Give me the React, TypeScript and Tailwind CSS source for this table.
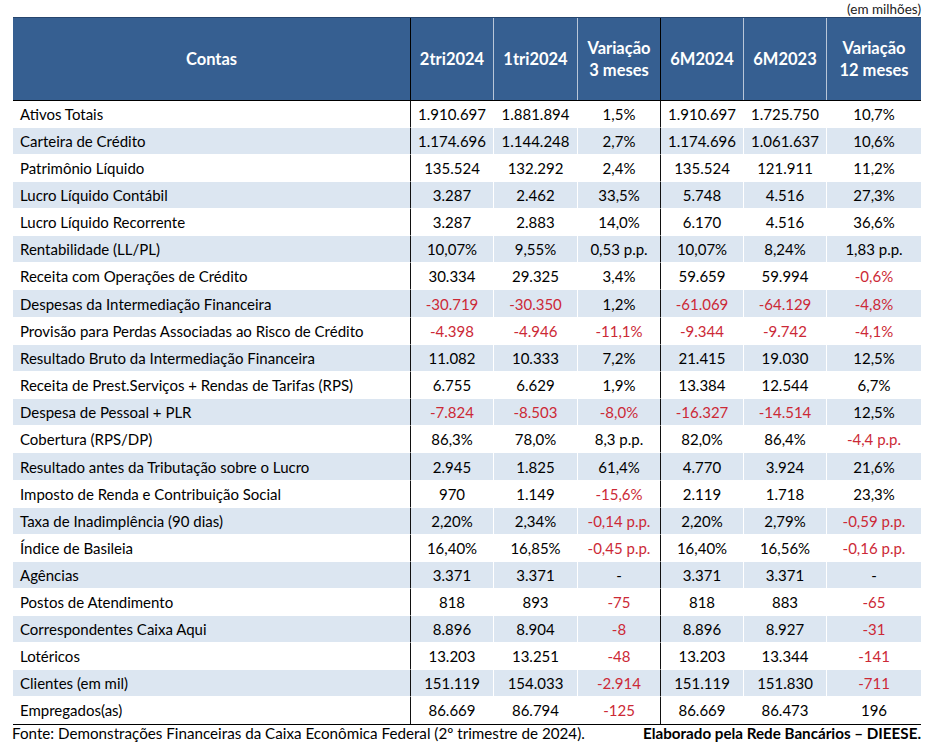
import React from "react";

const rows: string[][] = [
  ["Ativos Totais", "1.910.697", "1.881.894", "1,5%", "1.910.697", "1.725.750", "10,7%"],
  ["Carteira de Crédito", "1.174.696", "1.144.248", "2,7%", "1.174.696", "1.061.637", "10,6%"],
  ["Patrimônio Líquido", "135.524", "132.292", "2,4%", "135.524", "121.911", "11,2%"],
  ["Lucro Líquido Contábil", "3.287", "2.462", "33,5%", "5.748", "4.516", "27,3%"],
  ["Lucro Líquido Recorrente", "3.287", "2.883", "14,0%", "6.170", "4.516", "36,6%"],
  ["Rentabilidade (LL/PL)", "10,07%", "9,55%", "0,53 p.p.", "10,07%", "8,24%", "1,83 p.p."],
  ["Receita com Operações de Crédito", "30.334", "29.325", "3,4%", "59.659", "59.994", "-0,6%"],
  ["Despesas da Intermediação Financeira", "-30.719", "-30.350", "1,2%", "-61.069", "-64.129", "-4,8%"],
  ["Provisão para Perdas Associadas ao Risco de Crédito", "-4.398", "-4.946", "-11,1%", "-9.344", "-9.742", "-4,1%"],
  ["Resultado Bruto da Intermediação Financeira", "11.082", "10.333", "7,2%", "21.415", "19.030", "12,5%"],
  ["Receita de Prest.Serviços + Rendas de Tarifas (RPS)", "6.755", "6.629", "1,9%", "13.384", "12.544", "6,7%"],
  ["Despesa de Pessoal + PLR", "-7.824", "-8.503", "-8,0%", "-16.327", "-14.514", "12,5%"],
  ["Cobertura (RPS/DP)", "86,3%", "78,0%", "8,3 p.p.", "82,0%", "86,4%", "-4,4 p.p."],
  ["Resultado antes da Tributação sobre o Lucro", "2.945", "1.825", "61,4%", "4.770", "3.924", "21,6%"],
  ["Imposto de Renda e Contribuição Social", "970", "1.149", "-15,6%", "2.119", "1.718", "23,3%"],
  ["Taxa de Inadimplência (90 dias)", "2,20%", "2,34%", "-0,14 p.p.", "2,20%", "2,79%", "-0,59 p.p."],
  ["Índice de Basileia", "16,40%", "16,85%", "-0,45 p.p.", "16,40%", "16,56%", "-0,16 p.p."],
  ["Agências", "3.371", "3.371", "-", "3.371", "3.371", "-"],
  ["Postos de Atendimento", "818", "893", "-75", "818", "883", "-65"],
  ["Correspondentes Caixa Aqui", "8.896", "8.904", "-8", "8.896", "8.927", "-31"],
  ["Lotéricos", "13.203", "13.251", "-48", "13.203", "13.344", "-141"],
  ["Clientes (em mil)", "151.119", "154.033", "-2.914", "151.119", "151.830", "-711"],
  ["Empregados(as)", "86.669", "86.794", "-125", "86.669", "86.473", "196"],
];

const widths = ["w-[398px]", "w-[83px]", "w-[84px]", "w-[83px]", "w-[83px]", "w-[83px]", "w-[94px]"];

export default function App() {
  return (
    <div
      className="w-[930px] h-[742px] bg-white text-black overflow-hidden"
      style={{ fontFamily: "Lato, 'Noto Sans', sans-serif" }}
    >
      <div className="ml-[13px] w-[908px]">
        <div className="h-[17px] flex justify-end items-start text-[13.5px] leading-[18px] text-[#222]">
          (em milhões)
        </div>
        {/* header */}
        <div className="flex h-[84px] bg-[#365f91] text-white font-bold text-[16.5px] leading-[22px] border-t border-[#27466e] border-b border-b-black">
          <div className="w-[398px] flex items-center justify-center border-r border-black">Contas</div>
          <div className="w-[83px] flex items-center justify-center border-r border-[#b9c6d8]">2tri2024</div>
          <div className="w-[84px] flex items-center justify-center border-r border-[#b9c6d8]">1tri2024</div>
          <div className="w-[83px] flex flex-col items-center justify-center border-r border-black text-center">
            <span>Variação</span>
            <span>3 meses</span>
          </div>
          <div className="w-[83px] flex items-center justify-center border-r border-[#b9c6d8]">6M2024</div>
          <div className="w-[83px] flex items-center justify-center border-r border-[#b9c6d8]">6M2023</div>
          <div className="w-[94px] flex flex-col items-center justify-center text-center">
            <span>Variação</span>
            <span>12 meses</span>
          </div>
        </div>
        {/* body */}
        <div className="border-b border-black">
          {rows.map((r, i) => {
            const shaded = i % 2 === 1;
            const tall = i === 7 || i === 13;
            return (
              <div
                key={i}
                className={
                  tall
                    ? "flex h-[28px] text-[15px] leading-[28px]"
                    : "flex h-[27px] text-[15px] leading-[27px]"
                }
              >
                {r.map((c, j) => {
                  const red = c.startsWith("-") && c.length > 1;
                  const dark = j === 0 || j === 3;
                  return (
                    <div
                      key={j}
                      className={[
                        widths[j],
                        "whitespace-nowrap",
                        shaded ? "bg-[#dce6f1]" : "bg-white",
                        j === 0 ? "pl-[7px] text-left" : "text-center",
                        dark ? "border-r border-r-[#111]" : j < 6 ? "border-r border-r-white" : "",
                        i < rows.length - 1 ? "border-b border-b-white" : "",
                        red ? "text-[#cc2936]" : "text-black",
                      ].join(" ")}
                    >
                      {c}
                    </div>
                  );
                })}
              </div>
            );
          })}
        </div>
      </div>
      <div className="flex justify-between ml-[12px] w-[909px] text-[15.2px] leading-[16px] mt-0">
        <span>Fonte: Demonstrações Financeiras da Caixa Econômica Federal (2º trimestre de 2024).</span>
        <span className="font-bold">Elaborado pela Rede Bancários – DIEESE.</span>
      </div>
    </div>
  );
}
